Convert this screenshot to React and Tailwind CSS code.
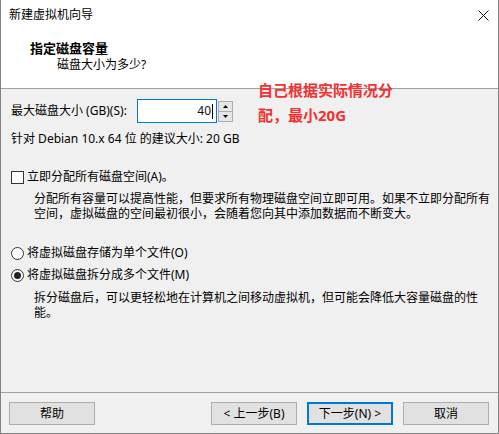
import React from 'react';

const font = { fontFamily: '"Noto Sans", "Noto Sans CJK SC", sans-serif' };

const Button = ({ children, primary }) => (
  <button
    type="button"
    className={
      primary
        ? 'w-[86px] h-[23px] bg-[#e1e1e1] border-2 border-[#0078d7] text-[12px] leading-none text-black whitespace-nowrap'
        : 'w-[86px] h-[23px] bg-[#e1e1e1] border border-[#adadad] text-[12px] leading-none text-black whitespace-nowrap'
    }
  >
    {children}
  </button>
);

const App = () => {
  return (
    <div
      className="relative w-[499px] h-[434px] flex flex-col bg-[#f0f0f0] border-l border-r border-b border-[#828282] text-black text-[12px] whitespace-nowrap"
      style={font}
    >
      {/* header */}
      <div className="h-[89px] bg-white border-b border-[#a0a0a0] relative">
        <div className="pt-[7px] pl-[8px] leading-[16px]">新建虚拟机向导</div>
        <svg className="absolute left-[477px] top-[10px]" width="11" height="11" viewBox="0 0 11 11">
          <path d="M0.5 0.5 L10.5 10.5 M10.5 0.5 L0.5 10.5" stroke="#111" strokeWidth="1" />
        </svg>
        <div className="mt-[17px] pl-[29px] font-bold text-[13px] leading-[16px]">指定磁盘容量</div>
        <div className="mt-[1px] pl-[56px] leading-[16px]">磁盘大小为多少?</div>
      </div>

      {/* body */}
      <div className="flex flex-col pl-[10px] pr-[10px]">
        <div className="flex items-center mt-[10px] h-[24px]">
          <div className="w-[126px]">最大磁盘大小 (GB)(S):</div>
          <div className="w-[80px] h-[24px] border border-[#0078d7] bg-white flex items-center justify-end pr-[3px]">
            <span className="text-[#111] leading-none">40</span>
            <span className="w-px h-[15px] bg-black ml-px" />
          </div>
          <div className="ml-[1px] w-[15px] h-[21px] border border-[#adadad] bg-[#e6e6e6] flex flex-col">
            <div className="flex-1 flex items-center justify-center border-b border-[#adadad]">
              <svg width="5" height="3" viewBox="0 0 5 3"><path d="M2.5 0 L5 3 L0 3 Z" fill="#000" /></svg>
            </div>
            <div className="flex-1 flex items-center justify-center">
              <svg width="5" height="3" viewBox="0 0 5 3"><path d="M0 0 L5 0 L2.5 3 Z" fill="#000" /></svg>
            </div>
          </div>
        </div>

        <div className="mt-[8px] leading-[16px]">针对 Debian 10.x 64 位 的建议大小: 20 GB</div>

        <div className="flex items-center mt-[22px] h-[16px]">
          <span className="w-[13px] h-[13px] border border-[#333] bg-white" />
          <span className="ml-[3px]">立即分配所有磁盘空间(A)。</span>
        </div>
        <div className="mt-[6px] pl-[23px] leading-[15px]">
          <div>分配所有容量可以提高性能，但要求所有物理磁盘空间立即可用。如果不立即分配所有</div>
          <div>空间，虚拟磁盘的空间最初很小，会随着您向其中添加数据而不断变大。</div>
        </div>

        <div className="flex items-center mt-[24px] h-[16px]">
          <span className="w-[13px] h-[13px] rounded-full border border-[#333] bg-white" />
          <span className="ml-[3px]">将虚拟磁盘存储为单个文件(O)</span>
        </div>
        <div className="flex items-center mt-[6px] h-[16px]">
          <span className="w-[13px] h-[13px] rounded-full border border-[#333] bg-white flex items-center justify-center">
            <span className="w-[7px] h-[7px] rounded-full bg-[#222]" />
          </span>
          <span className="ml-[3px]">将虚拟磁盘拆分成多个文件(M)</span>
        </div>
        <div className="mt-[7px] pl-[23px] leading-[15px]">
          <div>拆分磁盘后，可以更轻松地在计算机之间移动虚拟机，但可能会降低大容量磁盘的性</div>
          <div>能。</div>
        </div>
      </div>

      {/* footer */}
      <div className="mt-auto border-t border-[#a0a0a0] h-[41px] flex pt-[9px] pl-[8px] pr-[9px]">
        <Button>帮助</Button>
        <div className="ml-auto flex gap-[10px]">
          <Button>&lt; 上一步(B)</Button>
          <Button primary>下一步(N) &gt;</Button>
          <Button>取消</Button>
        </div>
      </div>

      {/* red annotation */}
      <div className="absolute left-[257px] top-[78px] text-[#f43030] font-bold text-[15px] leading-[25px]">
        <div>自己根据实际情况分</div>
        <div>配，最小20G</div>
      </div>
    </div>
  );
};

export default App;
